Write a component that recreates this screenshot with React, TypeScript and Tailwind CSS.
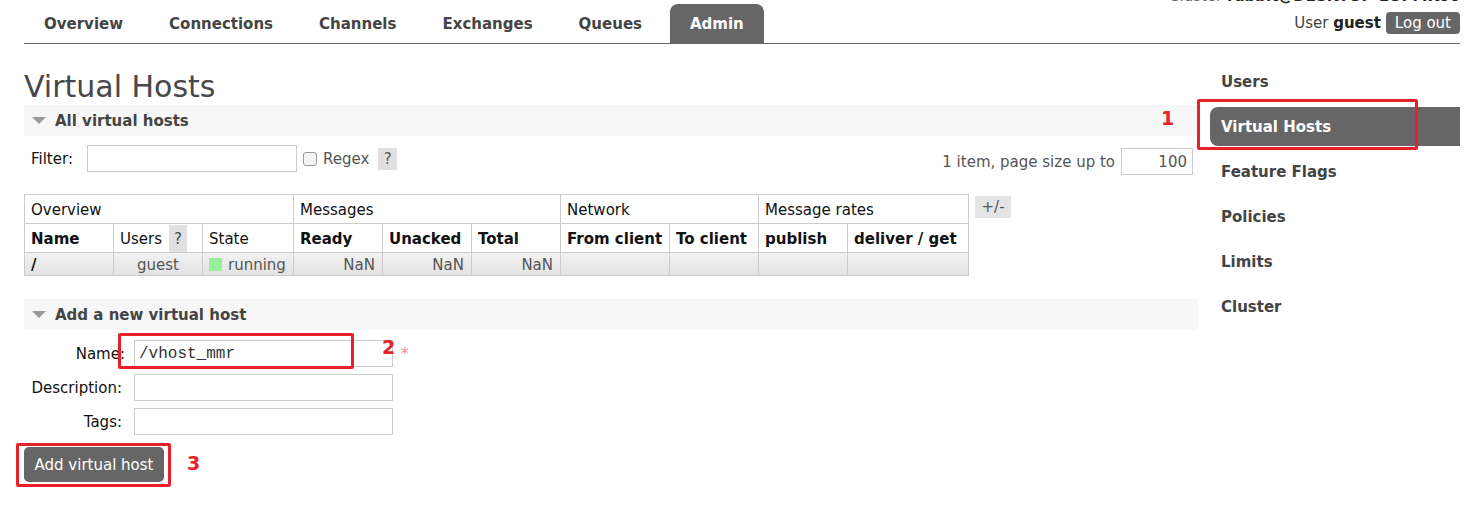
import React from "react";

const tabs = ["Overview", "Connections", "Channels", "Exchanges", "Queues", "Admin"];
const sideItems = ["Users", "Virtual Hosts", "Feature Flags", "Policies", "Limits", "Cluster"];

function SectionHeader({ title }: { title: string }) {
  return (
    <div className="flex h-[31px] items-center bg-[#f7f7f7] pl-[8px]">
      <span className="h-0 w-0 border-x-[7px] border-t-[7px] border-x-transparent border-t-[#9a9a9a]" />
      <span className="ml-[9px] font-bold text-[#444]">{title}</span>
    </div>
  );
}

function RedBox({ className }: { className: string }) {
  return <div className={`pointer-events-none absolute border-[3px] border-[#e8202a] ${className}`} />;
}

export default function App() {
  return (
    <div className="relative h-[506px] w-[1471px] overflow-hidden bg-white text-[15px] leading-[18px] text-[#444] font-['DejaVu_Sans','Verdana',sans-serif]">
      {/* top bar */}
      <div className="ml-[24px] mr-[11px] flex h-[44px] items-end justify-between border-b border-[#666]">
        <nav className="flex gap-[6px]">
          {tabs.map((t) => (
            <div
              key={t}
              className={
                t === "Admin"
                  ? "ml-[2px] flex h-[39px] items-center rounded-t-[8px] bg-[#666] px-[20px] font-bold text-white"
                  : "flex h-[39px] items-center px-[20px] font-bold text-[#444]"
              }
            >
              {t}
            </div>
          ))}
        </nav>
        <div className="flex h-full flex-col items-end">
          <div className="-mt-[13px] whitespace-nowrap">
            <span className="text-[#666]">Cluster </span>
            <span className="font-bold text-[#222]">rabbit@DESKTOP-1OPMK06</span>
          </div>
          <div className="mt-[7px] flex items-center gap-[5px]">
            <span className="text-[#444]">
              User <span className="font-bold text-[#222]">guest</span>
            </span>
            <span className="flex h-[22px] items-center rounded-[4px] bg-[#666] px-[9px] text-white">Log out</span>
          </div>
        </div>
      </div>

      <div className="flex">
        {/* main */}
        <main className="ml-[24px] w-[1174px]">
          <h1 className="mt-[25px] h-[36px] text-[30px] leading-[36px] text-[#484848]">Virtual Hosts</h1>
          <SectionHeader title="All virtual hosts" />

          <div className="mt-[9px] flex items-start justify-between">
            <div className="flex items-center">
              <span className="ml-[7px] text-[#111]">Filter:</span>
              <div className="ml-[14px] h-[27px] w-[210px] border border-[#ccc]" />
              <span className="ml-[6px] h-[14px] w-[14px] rounded-[3px] border border-[#999] bg-[#f3f3f3]" />
              <span className="ml-[6px] text-[#555]">Regex</span>
              <span className="ml-[9px] flex h-[22px] w-[19px] items-center justify-center bg-[#e0e0e0] text-[#555]">?</span>
            </div>
            <div className="mr-[5px] mt-[3px] flex items-center">
              <span className="text-[#555]">1 item, page size up to</span>
              <div className="ml-[6px] flex h-[27px] w-[72px] items-center justify-end border border-[#ccc] pr-[5px] text-[#555]">100</div>
            </div>
          </div>

          <div className="mt-[19px] flex items-start">
            <table className="w-[944px] table-fixed border-collapse">
              <colgroup>
                <col className="w-[89px]" />
                <col className="w-[89px]" />
                <col className="w-[91px]" />
                <col className="w-[89px]" />
                <col className="w-[89px]" />
                <col className="w-[89px]" />
                <col className="w-[109px]" />
                <col className="w-[89px]" />
                <col className="w-[89px]" />
                <col className="w-[121px]" />
              </colgroup>
              <thead>
                <tr className="h-[29px] text-left text-[#111]">
                  <th colSpan={3} className="border border-[#ccc] px-[6px] pt-[2px] font-normal">Overview</th>
                  <th colSpan={3} className="border border-[#ccc] px-[6px] pt-[2px] font-normal">Messages</th>
                  <th colSpan={2} className="border border-[#ccc] px-[6px] pt-[2px] font-normal">Network</th>
                  <th colSpan={2} className="border border-[#ccc] px-[6px] pt-[2px] font-normal">Message rates</th>
                </tr>
                <tr className="h-[29px] text-left text-[#111]">
                  <th className="border border-[#ccc] px-[6px] pt-[2px] font-bold">Name</th>
                  <th className="border border-[#ccc] px-[6px] py-0 font-normal">
                    <div className="flex h-[27px] items-center pt-[2px]">
                      Users
                      <span className="ml-[7px] -mt-[2px] flex h-[27px] w-[18px] items-center justify-center bg-[#e0e0e0] pt-[2px] text-[#444]">?</span>
                    </div>
                  </th>
                  <th className="border border-[#ccc] px-[6px] pt-[2px] font-normal">State</th>
                  <th className="border border-[#ccc] px-[6px] pt-[2px] font-bold">Ready</th>
                  <th className="border border-[#ccc] px-[6px] pt-[2px] font-bold">Unacked</th>
                  <th className="border border-[#ccc] px-[6px] pt-[2px] font-bold">Total</th>
                  <th className="border border-[#ccc] px-[6px] pt-[2px] font-bold">From client</th>
                  <th className="border border-[#ccc] px-[6px] pt-[2px] font-bold">To client</th>
                  <th className="border border-[#ccc] px-[6px] pt-[2px] font-bold">publish</th>
                  <th className="whitespace-nowrap border border-[#ccc] px-[6px] pt-[2px] font-bold">deliver / get</th>
                </tr>
              </thead>
              <tbody>
                <tr className="h-[23px] bg-gradient-to-b from-[#f2f2f2] to-[#e2e2e2] text-[#555]">
                  <td className="border border-[#ccc] px-[6px] pt-[1px] font-bold text-[#111]">/</td>
                  <td className="border border-[#ccc] px-[6px] pt-[1px] text-center">guest</td>
                  <td className="border border-[#ccc] px-[6px] pt-[1px]">
                    <div className="flex items-center">
                      <span className="h-[13px] w-[13px] bg-[#99ee99]" />
                      <span className="ml-[6px]">running</span>
                    </div>
                  </td>
                  <td className="border border-[#ccc] px-[7px] pt-[1px] text-right">NaN</td>
                  <td className="border border-[#ccc] px-[7px] pt-[1px] text-right">NaN</td>
                  <td className="border border-[#ccc] px-[7px] pt-[1px] text-right">NaN</td>
                  <td className="border border-[#ccc]" />
                  <td className="border border-[#ccc]" />
                  <td className="border border-[#ccc]" />
                  <td className="border border-[#ccc]" />
                </tr>
              </tbody>
            </table>
            <span className="ml-[6px] mt-[2px] flex h-[22px] w-[36px] items-center justify-center bg-[#e4e4e4] text-[#555]">+/-</span>
          </div>

          <div className="mt-[23px]">
            <SectionHeader title="Add a new virtual host" />
          </div>

          <div className="mt-[10px] grid grid-cols-[98px_259px_auto] items-center gap-x-[12px] gap-y-[7px] text-[#111]">
            <span className="-mr-[3px] text-right">Name:</span>
            <div className="flex h-[27px] items-center border border-[#ccc] px-[4px] text-[16px] text-[#333] font-['Liberation_Mono',monospace]">
              /vhost_mmr
            </div>
            <span className="-ml-[4px] text-[#f08c9a]">*</span>
            <span className="text-right">Description:</span>
            <div className="h-[27px] border border-[#ccc]" />
            <span />
            <span className="text-right">Tags:</span>
            <div className="h-[27px] border border-[#ccc]" />
            <span />
          </div>

          <button className="mt-[12px] flex h-[35px] w-[140px] items-center justify-center rounded-[5px] bg-[#666] text-white">
            Add virtual host
          </button>
        </main>

        {/* sidebar */}
        <aside className="ml-[12px] mt-[18px] flex w-[250px] flex-col gap-[6px]">
          {sideItems.map((s) => (
            <div
              key={s}
              className={
                s === "Virtual Hosts"
                  ? "flex h-[39px] items-center rounded-l-[8px] bg-[#666] pl-[11px] pt-[1px] font-bold text-white"
                  : "flex h-[39px] items-center pl-[11px] pt-[1px] font-bold text-[#444]"
              }
            >
              {s}
            </div>
          ))}
        </aside>
      </div>

      {/* annotations */}
      <RedBox className="left-[1197px] top-[99px] h-[51px] w-[221px] rounded-[2px]" />
      <span className="absolute left-[1161px] top-[109px] text-[19px] font-bold text-[#e8202a] font-['DejaVu_Sans',sans-serif]">1</span>
      <RedBox className="left-[118px] top-[333px] h-[36px] w-[236px] rounded-[2px]" />
      <span className="absolute left-[382px] top-[338px] text-[19px] font-bold text-[#e8202a] font-['DejaVu_Sans',sans-serif]">2</span>
      <RedBox className="left-[16px] top-[443px] h-[44px] w-[155px] rounded-[2px]" />
      <span className="absolute left-[187px] top-[454px] text-[19px] font-bold text-[#e8202a] font-['DejaVu_Sans',sans-serif]">3</span>
    </div>
  );
}
